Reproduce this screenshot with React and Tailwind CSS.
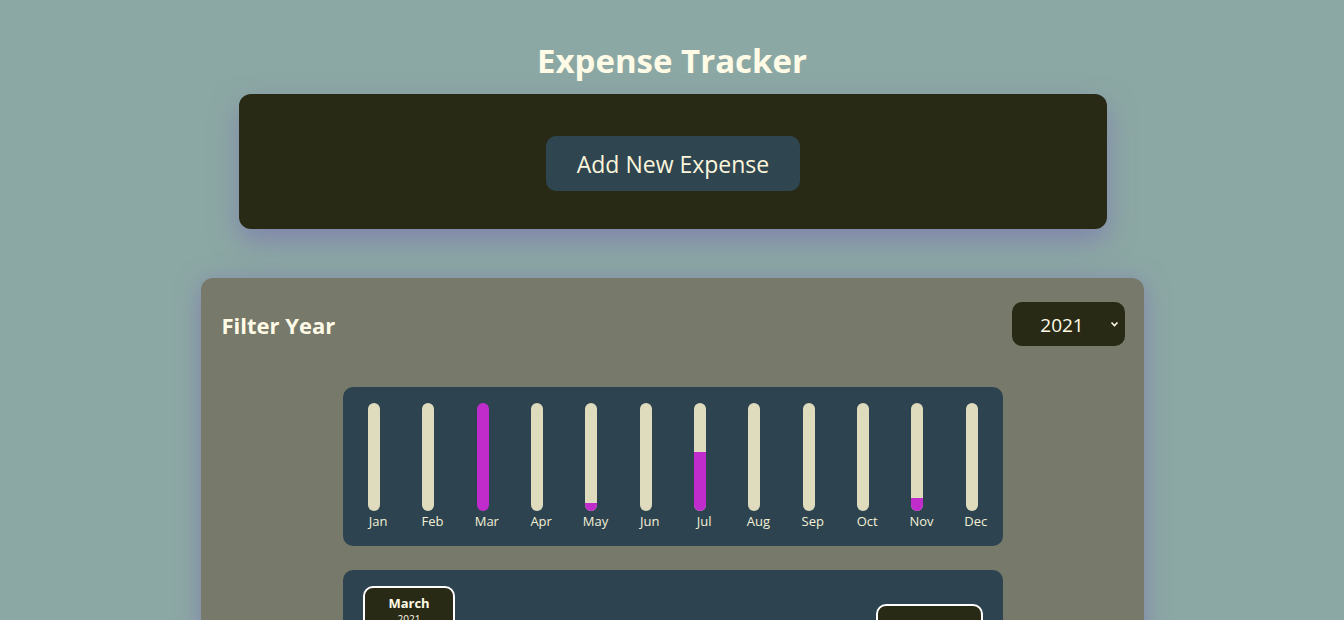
import React from 'react'

const months = [
  { label: 'Jan', value: 0 },
  { label: 'Feb', value: 0 },
  { label: 'Mar', value: 100 },
  { label: 'Apr', value: 0 },
  { label: 'May', value: 7 },
  { label: 'Jun', value: 0 },
  { label: 'Jul', value: 55 },
  { label: 'Aug', value: 0 },
  { label: 'Sep', value: 0 },
  { label: 'Oct', value: 0 },
  { label: 'Nov', value: 12 },
  { label: 'Dec', value: 0 },
]

function ChartBar({ label, value }) {
  return (
    <div className="flex flex-1 flex-col items-center">
      <div className="flex h-[108px] w-3 flex-col justify-end overflow-hidden rounded-full bg-[#dfdbbd]">
        <div className="w-full bg-[#c02ccc]" style={{ height: `${value}%` }} />
      </div>
      <div className="mt-[2px] pl-2 text-[13px] leading-4 text-[#f3efd6]">{label}</div>
    </div>
  )
}

export default function App() {
  return (
    <div className="min-h-screen bg-[#8ca8a4] pt-[39px] font-['Open_Sans',sans-serif]">
      <h1 className="text-center text-[33px] font-bold leading-[44px] text-[#fffbe6]">Expense Tracker</h1>

      <div className="mx-auto mt-[11px] flex h-[135px] w-[868px] translate-x-px items-center justify-center rounded-xl bg-[#292a16] shadow-[0_12px_28px_rgba(120,100,180,0.5)]">
        <button className="mt-[3px] h-[55px] w-[254px] rounded-[10px] bg-[#2f4550] pt-[3px] text-[23px] text-[#fbf6dc]">Add New Expense</button>
      </div>

      <div className="mx-auto mt-[49px] w-[943px] rounded-xl bg-[#77796a] pb-8 pl-[21px] pr-[19px] pt-6 shadow-[0_4px_24px_rgba(120,100,180,0.55)]">
        <div className="flex items-center justify-between">
          <h2 className="mt-[3px] text-[22px] font-bold text-[#fffbe6]">Filter Year</h2>
          <div className="relative flex h-[44px] w-[113px] items-center justify-center rounded-[10px] bg-[#292a16] text-[19px] text-[#fffbe6]">
            <span className="-ml-3 mt-[2px]">2021</span>
            <svg className="absolute right-[6px] top-[19px]" width="9" height="7" viewBox="0 0 9 7" fill="none">
              <path d="M1.5 1.5 L4.5 4.5 L7.5 1.5" stroke="#fffbe6" strokeWidth="1.6" />
            </svg>
          </div>
        </div>

        <div className="mx-auto mt-[41px] flex h-[159px] w-[660px] rounded-[10px] bg-[#2d4450] px-1 pt-4">
          {months.map((m) => (
            <ChartBar key={m.label} label={m.label} value={m.value} />
          ))}
        </div>

        <div className="mx-auto mt-6 flex h-[120px] w-[660px] justify-between rounded-[10px] bg-[#2d4450] px-5 pt-4">
          <div className="flex h-[80px] w-[92px] flex-col items-center rounded-[10px] border-2 border-white bg-[#292a16] pt-[5px] text-[#fffbe6]">
            <div className="text-[13px] font-bold leading-5">March</div>
            <div className="text-[10px] leading-3">2021</div>
          </div>
          <div className="mt-[18px] h-[50px] w-[107px] rounded-[10px] border-2 border-white bg-[#292a16]" />
        </div>
      </div>
    </div>
  )
}
